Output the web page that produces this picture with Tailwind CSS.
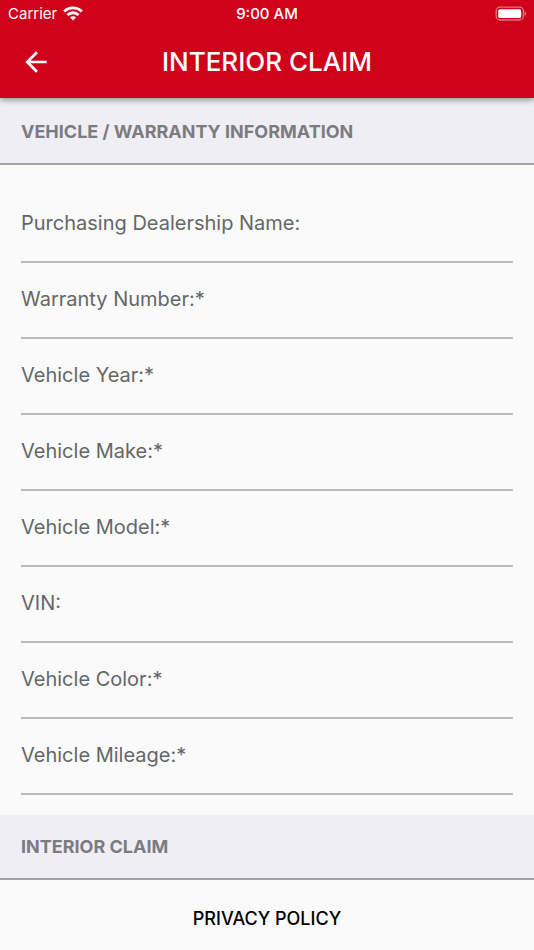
<!DOCTYPE html>
<html lang="en">

<head>
    <meta charset="UTF-8" />
    <meta content="width=device-width, initial-scale=1.0" name="viewport" />
    <title>Interior Claim</title>
    <script src="https://cdn.jsdelivr.net/npm/@tailwindcss/browser@4"></script>
</head>

<body class="bg-[#fafafa] font-['Inter',sans-serif] min-h-screen flex flex-col">
<!-- App bar -->
<header class="relative z-10 bg-[#d0021b] text-white shadow-[0_2px_6px_rgba(0,0,0,0.4)]">
    <!-- Status bar -->
    <div class="grid grid-cols-3 items-center h-7 px-2 text-[15px]">
        <div class="flex items-center gap-1.5">
            <span>Carrier</span>
            <svg class="w-5 h-4" viewBox="0 0 20 16" fill="none" stroke="currentColor" stroke-width="2.8">
                <path d="M1.2 5.4a12.6 12.6 0 0 1 17.6 0" />
                <path d="M4.5 9a7.8 7.8 0 0 1 11 0" />
                <path d="M10 14.6l-3-3a4.2 4.2 0 0 1 6 0z" fill="currentColor" stroke="none" />
            </svg>
        </div>
        <span class="text-center font-medium">9:00 AM</span>
        <svg class="justify-self-end w-8 h-4" viewBox="0 0 32 16">
            <rect x="2.2" y="1.2" width="27.2" height="12.8" rx="3.8" fill="none" stroke="#fff" stroke-opacity=".45" stroke-width="1.3" />
            <rect x="4.2" y="3.2" width="23" height="8.8" rx="1.6" fill="#fff" />
            <path d="M30.6 5.2c1 .4 1.4 1.3 1.4 2.4s-.4 2-1.4 2.4z" fill="#fff" fill-opacity=".5" />
        </svg>
    </div>
    <div class="grid grid-cols-[48px_1fr_48px] items-center h-[70px] px-3 pb-0.5">
        <button class="w-12 h-12 flex items-center justify-center" type="button" aria-label="Back">
            <svg class="w-8 h-8" viewBox="0 0 24 24" fill="currentColor">
                <path d="M20 11H7.83l5.59-5.59L12 4l-8 8 8 8 1.41-1.41L7.83 13H20v-2z" />
            </svg>
        </button>
        <h1 class="text-center text-[26px] font-medium leading-8">INTERIOR CLAIM</h1>
    </div>
</header>

<main>
    <form>
        <!-- Vehicle / warranty -->
        <div class="bg-[#efeef4] pt-0.5">
            <h2 class="h-[65px] flex items-center px-[21px] border-b-2 border-[#a3a2a7] text-[#7c7b80] text-[18px] font-bold">VEHICLE / WARRANTY INFORMATION</h2>
        </div>
        <div class="px-[21px] pt-[22px] pb-5 text-[20px] text-[#666666]">
            <div class="flex flex-col">
                <label class="pt-[22px] leading-7" for="dealership">Purchasing Dealership Name:</label>
                <input class="h-[26px] w-full border-b-2 border-[#bababa] focus:outline-none" type="text" id="dealership" />
            </div>
            <div class="flex flex-col">
                <label class="pt-[22px] leading-7" for="warranty">Warranty Number:*</label>
                <input class="h-[26px] w-full border-b-2 border-[#bababa] focus:outline-none" type="text" id="warranty" />
            </div>
            <div class="flex flex-col">
                <label class="pt-[22px] leading-7" for="year">Vehicle Year:*</label>
                <input class="h-[26px] w-full border-b-2 border-[#bababa] focus:outline-none" type="text" id="year" />
            </div>
            <div class="flex flex-col">
                <label class="pt-[22px] leading-7" for="make">Vehicle Make:*</label>
                <input class="h-[26px] w-full border-b-2 border-[#bababa] focus:outline-none" type="text" id="make" />
            </div>
            <div class="flex flex-col">
                <label class="pt-[22px] leading-7" for="model">Vehicle Model:*</label>
                <input class="h-[26px] w-full border-b-2 border-[#bababa] focus:outline-none" type="text" id="model" />
            </div>
            <div class="flex flex-col">
                <label class="pt-[22px] leading-7" for="vin">VIN:</label>
                <input class="h-[26px] w-full border-b-2 border-[#bababa] focus:outline-none" type="text" id="vin" />
            </div>
            <div class="flex flex-col">
                <label class="pt-[22px] leading-7" for="color">Vehicle Color:*</label>
                <input class="h-[26px] w-full border-b-2 border-[#bababa] focus:outline-none" type="text" id="color" />
            </div>
            <div class="flex flex-col">
                <label class="pt-[22px] leading-7" for="mileage">Vehicle Mileage:*</label>
                <input class="h-[26px] w-full border-b-2 border-[#bababa] focus:outline-none" type="text" id="mileage" />
            </div>
        </div>
        <!-- Interior claim -->
        <h2 class="h-[65px] flex items-center px-[21px] bg-[#efeef4] border-b-2 border-[#a3a2a7] text-[#7c7b80] text-[18px] font-bold">INTERIOR CLAIM</h2>
    </form>
</main>

<!-- Footer -->
<footer class="flex justify-center pt-[25px] pb-4">
    <a class="text-black text-[18px] font-medium leading-7" href="#">PRIVACY POLICY</a>
</footer>
</body>

</html>
